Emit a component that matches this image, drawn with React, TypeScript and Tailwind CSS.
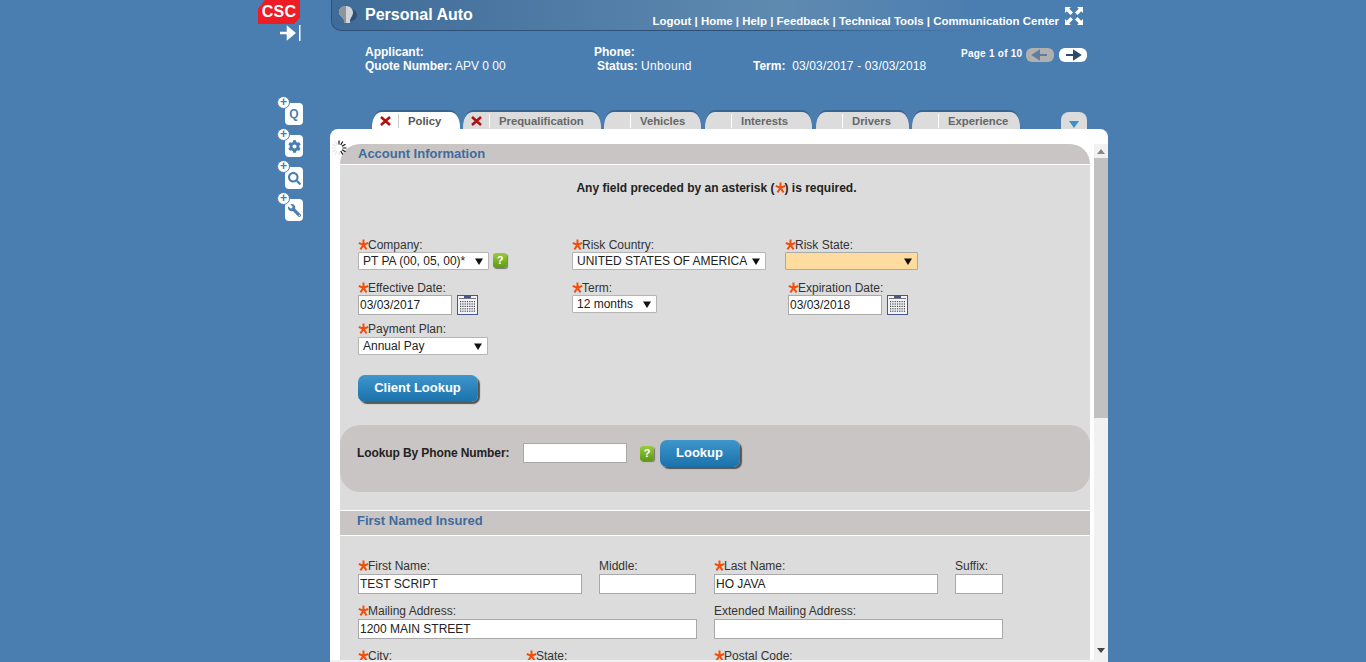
import { FaCog, FaSearch, FaWrench } from 'react-icons/fa'

function Star() {
  return (
    <svg width="11" height="11" viewBox="0 0 11 11" className="inline-block align-[-1px] mr-[-1px]">
      <path d="M5.5 0.5v5.5M5.5 6L0.8 3.8M5.5 6l4.7-2.2M5.5 6L2.4 10.4M5.5 6l3.1 4.4" stroke="#f0500f" strokeWidth="2" fill="none" />
    </svg>
  )
}

function Label({ text, req }: { text: string; req?: boolean }) {
  return <div className="h-[14px] text-xs leading-[14px] text-[#333] whitespace-nowrap">{req && <Star />}{text}</div>
}

function TextBox({ value, w }: { value?: string; w: string }) {
  return <div className={`${w} h-5 bg-white border border-[#a9a9a9] pl-px text-xs leading-[19px] text-[#222] whitespace-nowrap`}>{value}</div>
}

function Triangle() {
  return <svg width="8" height="7" viewBox="0 0 8 7" className="shrink-0"><path d="M0 0.5h8L4 7z" fill="#111" /></svg>
}

function Select({ value, w, warn }: { value?: string; w: string; warn?: boolean }) {
  return (
    <div className={`${w} h-[18px] flex items-center justify-between pl-1 pr-[5px] rounded-[1px] border text-xs text-[#222] whitespace-nowrap ${warn ? 'bg-[#fedb9f] border-[#a9a9a9]' : 'bg-white border-[#b5b5b5]'}`}>
      <span>{value}</span>
      <Triangle />
    </div>
  )
}

function Help() {
  return <div className="w-[14px] h-[15px] rounded-[3px] bg-gradient-to-b from-[#9acb3c] to-[#5c9a12] shadow-[1px_1px_1px_#777] text-white text-[11px] font-bold leading-[15px] text-center">?</div>
}

function Calendar() {
  const dots = []
  for (let r = 0; r < 5; r++) for (let c = 0; c < 7; c++) dots.push(<rect key={r + '-' + c} x={3 + c * 2.3} y={6 + r * 2.4} width="1.2" height="1.2" fill="#444" />)
  return (
    <svg width="21" height="20" viewBox="0 0 21 20" className="shrink-0">
      <rect x="0.5" y="0.5" width="20" height="19" fill="#f3f5fb" stroke="#4a5590" />
      <rect x="7" y="1" width="7" height="2" fill="#4a5590" />
      <rect x="2" y="3" width="17" height="1" fill="#777" />
      {dots}
    </svg>
  )
}

function BlueButton({ text, w }: { text: string; w: string }) {
  return (
    <div className={`${w} h-[27px] pr-px rounded-[7px] bg-gradient-to-b from-[#3d96cc] to-[#1a72ac] shadow-[2px_2px_1px_#555] text-white text-[13px] font-bold leading-[25px] text-center`}>{text}</div>
  )
}

function SectionBar({ text, top }: { text: string; top?: boolean }) {
  return (
    <div className={`bg-[#c9c5c4] border-b border-white text-[13px] font-bold text-[#3f6b9c] ${top ? 'h-[21px] rounded-t-[20px] pl-[18px] leading-[19px]' : 'h-[26px] border-t pl-[17px] leading-[20px]'}`}>{text}</div>
  )
}

function SideButton({ children }: { children: React.ReactNode }) {
  return (
    <div className="relative w-[18px] h-[22px] bg-white rounded-[4px] ml-[27px] flex items-center justify-center text-[#4a7db0] text-xs font-bold">
      <div className="absolute -left-[8px] -top-[7px] w-[13px] h-[13px] rounded-full bg-white border border-[#4a7db0] text-[#4a7db0] text-[12px] leading-[10px] text-center font-bold">+</div>
      {children}
    </div>
  )
}

function Tab({ text, w, active, x }: { text: string; w: string; active?: boolean; x?: boolean }) {
  return (
    <div className={`${w} h-[19px] [border-radius:10px_10px_0_0/16px_16px_0_0] border-t-2 border-[#3b6590] flex items-center text-[11.3px] font-bold shrink-0 ${active ? 'bg-white text-[#555]' : 'bg-[#dcdcdc] text-[#666]'}`}>
      <div className="w-[26px] flex justify-center">
        {x && <svg width="11" height="10" viewBox="0 0 11 10"><path d="M1 1l9 8M10 1l-9 8" stroke="#b01010" strokeWidth="2.6" /></svg>}
      </div>
      <div className={`w-px h-[14px] ${active ? 'bg-[#ccc]' : 'bg-white'}`} />
      <div className="pl-[9px] pt-px whitespace-nowrap">{text}</div>
    </div>
  )
}

function Spinner() {
  const lines = []
  for (let i = -3; i < 9; i++) {
    const a = (i * Math.PI) / 6
    const c = i < 3 ? '#111' : '#e6e6e6'
    lines.push(<line key={i} x1={8 + Math.cos(a) * 3.5} y1={8 + Math.sin(a) * 3.5} x2={8 + Math.cos(a) * 7.5} y2={8 + Math.sin(a) * 7.5} stroke={c} strokeWidth="1.2" />)
  }
  return <svg width="16" height="16" viewBox="0 0 16 16" className="absolute left-[1px] top-[11px]">{lines}</svg>
}

export default function App() {
  return (
    <div className="h-[662px] overflow-hidden bg-[#4a7db0] font-['Liberation_Sans',Arial,sans-serif] flex justify-center">
      <div className="w-[850px] flex">
        {/* left rail */}
        <div className="w-[72px] shrink-0 flex flex-col">
          <div className="w-[42px] h-[24px] bg-[#ee1c25] text-white font-bold text-[16px] leading-[24px] text-center tracking-[0.3px] [clip-path:polygon(16%_0,100%_0,100%_72%,86%_100%,0_100%,0_38%)]">CSC</div>
          <svg width="24" height="16" viewBox="0 0 24 16" className="ml-[22px] mt-[1px]">
            <path d="M0 8h12M8 3l6 5-6 5z" fill="#fff" stroke="#fff" strokeWidth="2.5" />
            <rect x="19" y="0" width="1.5" height="16" fill="#fff" />
          </svg>
          <div className="mt-[62px] flex flex-col gap-[10px]">
            <SideButton>Q</SideButton>
            <SideButton><FaCog size={13} /></SideButton>
            <SideButton><FaSearch size={13} /></SideButton>
            <SideButton><FaWrench size={13} className="-scale-x-100" /></SideButton>
          </div>
        </div>

        <div className="w-[778px] shrink-0 flex flex-col">
          {/* top bar */}
          <div className="ml-px h-[31px] pb-px rounded-bl-[10px] bg-[linear-gradient(90deg,#2f5078_0%,#2f5078_55%,#4a7db0_84%)]">
            <div className="h-[30px] ml-px rounded-bl-[9px] bg-[linear-gradient(90deg,#3f6b98_0%,#4f7ba5_30%,#5f8ab0_58%,#4a7db0_84%)] flex justify-between text-white">
              <div className="flex items-center">
                <svg width="22" height="22" viewBox="0 0 22 22" className="ml-[5px]">
                  <path d="M14 5a6 6 0 0 1 0 12h-3V5z" fill="#2f4f74" />
                  <path d="M9 2c4.500 0 7 3 7 6.500 0 3-2 4.500-3 7.500v3H7v-3C6 13 2 11.500 2 8.500 2 5 4.500 2 9 2z" fill="#d2d5d8" />
                  <path d="M9 2C4.500 2 2 5 2 8.500 2 11.500 6 13 7 16v3h2z" fill="#8f9498" />
                </svg>
                <span className="ml-[6px] text-base font-bold leading-none">Personal Auto</span>
              </div>
              <div className="flex items-start pr-[24px]">
                <span className="text-[11.45px] font-bold mt-[13px] mr-[5px] whitespace-nowrap">Logout | Home | Help | Feedback | Technical Tools | Communication Center</span>
                <svg width="20" height="20" viewBox="0 0 20 20" className="mt-[6px]">
                  <path d="M1 1h6L5.200 2.800 9 6.500 6.500 9 2.800 5.200 1 7zM19 1v6l-1.800-1.800L13.500 9 11 6.500l3.800-3.700L13 1zM1 19v-6l1.800 1.800L6.500 11 9 13.500l-3.800 3.700L7 19zM19 19h-6l1.800-1.800L11 13.500l2.500-2.500 3.700 3.800L19 13z" fill="#fff" />
                </svg>
              </div>
            </div>
          </div>

          {/* quote summary */}
          <div className="h-[79px] pl-[35px] pt-[14px] flex text-xs text-white leading-[14px]">
            <div className="w-[229px]">
              <div className="font-bold">Applicant:</div>
              <div><span className="font-bold">Quote Number:</span> APV 0 00</div>
            </div>
            <div className="w-[159px]">
              <div className="font-bold">Phone:</div>
              <div className="pl-[3px]"><span className="font-bold">Status:</span> <span className="tracking-[0.3px]">Unbound</span></div>
            </div>
            <div className="w-[208px] pt-[14px] whitespace-nowrap"><span className="font-bold">Term:</span>&nbsp; <span className="tracking-[0.15px]">03/03/2017 - 03/03/2018</span></div>
            <div className="flex items-start gap-[4px] text-[10px] font-bold leading-3 whitespace-nowrap tracking-[0.25px]">
              <span className="mt-[3px]">Page 1 of 10</span>
              <svg width="28" height="14" viewBox="0 0 28 14" className="mt-[3px]">
                <rect width="28" height="14" rx="6" fill="#b0b0b0" />
                <path d="M21 7H11M13 3L7 7l6 4z" fill="#5f7f9f" stroke="#5f7f9f" strokeWidth="2" />
              </svg>
              <svg width="28" height="14" viewBox="0 0 28 14" className="mt-[3px] ml-px">
                <rect width="28" height="14" rx="6" fill="#fff" />
                <path d="M7 7h10M15 3l6 4-6 4z" fill="#2b4a6f" stroke="#2b4a6f" strokeWidth="2" />
              </svg>
            </div>
          </div>

          {/* tabs */}
          <div className="h-[19px] pl-[42px] pr-[21px] flex gap-[3px]">
            <Tab text="Policy" w="w-[88px]" active x />
            <Tab text="Prequalification" w="w-[138px]" x />
            <Tab text="Vehicles" w="w-[97px]" />
            <div className="w-[107px] ml-px flex"><Tab text="Interests" w="w-[107px]" /></div>
            <div className="w-[93px] ml-px flex"><Tab text="Drivers" w="w-[93px]" /></div>
            <Tab text="Experience" w="w-[108px]" />
            <div className="ml-auto w-[26px] h-[17px] mt-[2px] rounded-t-[8px] bg-[#dcdcdc] flex items-end justify-center pb-[1px]">
              <svg width="10" height="7" viewBox="0 0 10 7"><path d="M0 0h10L5 7z" fill="#3d8fcc" /></svg>
            </div>
          </div>

          {/* main panel */}
          <div className="relative flex-1 min-h-0 bg-white rounded-t-[8px] flex flex-col overflow-hidden">
            <Spinner />
            <div className="flex-1 min-h-0 pl-[10px] pt-[15px] flex overflow-hidden">
              <div className="w-[750px] shrink-0 bg-[#dcdcdc] rounded-t-[20px] overflow-hidden">
                <SectionBar text="Account Information" top />
                <div className="text-xs font-bold text-[#222] text-center pl-[3px] pt-[15px] h-[73px]">
                  Any field preceded by an asterisk (<Star />) is required.
                </div>

                <div className="pl-[18px]">
                  <div className="grid grid-cols-[214px_213px_1fr] h-[32px]">
                    <div>
                      <Label text="Company:" req />
                      <div className="flex items-start gap-[4px]"><Select value="PT PA (00, 05, 00)*" w="w-[131px]" /><div className="mt-px"><Help /></div></div>
                    </div>
                    <div>
                      <Label text="Risk Country:" req />
                      <Select value="UNITED STATES OF AMERICA" w="w-[194px]" />
                    </div>
                    <div>
                      <Label text="Risk State:" req />
                      <Select w="w-[133px]" warn />
                    </div>
                  </div>
                  <div className="grid grid-cols-[214px_213px_1fr] mt-[11px] h-[34px]">
                    <div>
                      <Label text="Effective Date:" req />
                      <div className="flex items-center gap-[5px]"><TextBox value="03/03/2017" w="w-[94px]" /><Calendar /></div>
                    </div>
                    <div>
                      <Label text="Term:" req />
                      <Select value="12 months" w="w-[85px]" />
                    </div>
                    <div className="ml-[3px]">
                      <Label text="Expiration Date:" req />
                      <div className="flex items-center gap-[5px]"><TextBox value="03/03/2018" w="w-[94px]" /><Calendar /></div>
                    </div>
                  </div>
                  <div className="mt-[7px]">
                    <Label text="Payment Plan:" req />
                    <div className="mt-px"><Select value="Annual Pay" w="w-[130px]" /></div>
                  </div>
                  <div className="mt-[20px]"><BlueButton text="Client Lookup" w="w-[120px]" /></div>
                </div>

                <div className="mt-[23px] h-[67px] rounded-[20px] bg-[#c9c5c4] pl-[17px] pt-[15px] flex items-start">
                  <span className="w-[166px] text-xs font-bold text-[#222] leading-[26px] tracking-[-0.1px]">Lookup By Phone Number:</span>
                  <div className="mt-[3px]"><TextBox w="w-[104px]" /></div>
                  <div className="ml-[13px] mt-[6px]"><Help /></div>
                  <div className="ml-[6px]"><BlueButton text="Lookup" w="w-[80px]" /></div>
                </div>

                <div className="mt-[18px]"><SectionBar text="First Named Insured" /></div>

                <div className="pl-[18px] pt-[23px]">
                  <div className="flex h-[36px]">
                    <div className="w-[241px]"><Label text="First Name:" req /><div className="mt-px"><TextBox value="TEST SCRIPT" w="w-[224px]" /></div></div>
                    <div className="w-[115px]"><Label text="Middle:" /><div className="mt-px"><TextBox w="w-[97px]" /></div></div>
                    <div className="w-[241px]"><Label text="Last Name:" req /><div className="mt-px"><TextBox value="HO JAVA" w="w-[224px]" /></div></div>
                    <div><Label text="Suffix:" /><div className="mt-px"><TextBox w="w-[48px]" /></div></div>
                  </div>
                  <div className="flex mt-[9px] h-[36px]">
                    <div className="w-[356px]"><Label text="Mailing Address:" req /><div className="mt-px"><TextBox value="1200 MAIN STREET" w="w-[339px]" /></div></div>
                    <div><Label text="Extended Mailing Address:" /><div className="mt-px"><TextBox w="w-[289px]" /></div></div>
                  </div>
                  <div className="flex mt-[9px]">
                    <div className="w-[168px]"><Label text="City:" req /></div>
                    <div className="w-[188px]"><Label text="State:" req /></div>
                    <div><Label text="Postal Code:" req /></div>
                  </div>
                </div>
              </div>

              {/* scrollbar */}
              <div className="ml-[4px] w-[14px] bg-[#f1f1f1] flex flex-col items-center">
                <div className="h-[14px] flex items-center"><svg width="8" height="5" viewBox="0 0 8 5"><path d="M0 5h8L4 0z" fill="#888" /></svg></div>
                <div className="w-full h-[260px] bg-[#c1c1c1]" />
                <div className="mt-auto h-[20px] flex items-center"><svg width="8" height="5" viewBox="0 0 8 5"><path d="M0 0h8L4 5z" fill="#444" /></svg></div>
              </div>
            </div>
            <div className="h-[2px] bg-[#f1f1f1] shrink-0" />
          </div>
        </div>
      </div>
    </div>
  )
}
